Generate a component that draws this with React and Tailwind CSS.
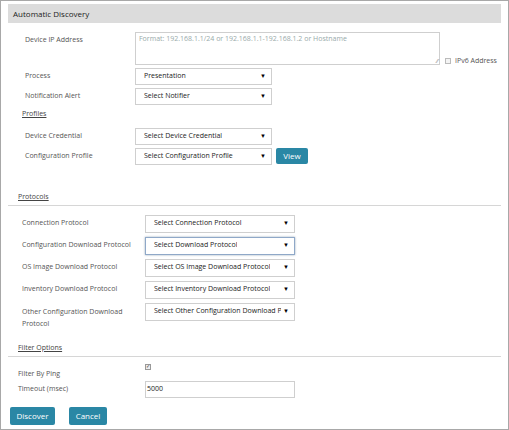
function Select({ text, w = "w-[137px]", h = "h-[17px]", focus = false }) {
  return (
    <div
      className={`${w} ${h} flex items-center justify-between border ${
        focus ? "border-[#8fa8c8] shadow-[0_0_2px_#9ab]" : "border-[#cfcfcf]"
      } bg-white pl-[8px] pr-[5px] text-[7px] text-[#222] shrink-0`}
    >
      <span className="whitespace-nowrap overflow-hidden">{text}</span>
      <span className="text-[6px] text-black ml-[2px] shrink-0">▼</span>
    </div>
  );
}

function Btn({ children, className = "" }) {
  return (
    <div
      className={`flex items-center justify-center rounded-[2px] bg-[#2a87a5] text-white text-[8px] ${className}`}
    >
      {children}
    </div>
  );
}

function SectionTitle({ children, className = "" }) {
  return (
    <div className={`border-b border-[#d6d6d6] leading-[10px] ${className}`}>
      <span className="underline text-[7px] text-[#444] pl-[10px]">{children}</span>
    </div>
  );
}

export default function App() {
  const protocols = [
    ["Connection Protocol", "Select Connection Protocol"],
    ["Configuration Download Protocol", "Select Download Protocol", true],
    ["OS Image Download Protocol", "Select OS Image Download Protocol"],
    ["Inventory Download Protocol", "Select Inventory Download Protocol"],
  ];
  return (
    <div
      className="w-[509px] h-[430px] border border-[#a8a8a8] bg-white pt-[3px] px-[7px] text-[#555]"
      style={{ fontFamily: '"Open Sans", "Noto Sans", sans-serif' }}
    >
      {/* header */}
      <div className="h-[19px] bg-[#dcdcdc] flex items-center pl-[5px] text-[8px] text-[#222]">
        Automatic Discovery
      </div>

      {/* device section */}
      <div className="pl-[17px] mt-[9px] flex flex-col gap-[3px]">
        <div className="flex items-start">
          <div className="w-[110px] text-[7px] pt-[3px]">Device IP Address</div>
          <div className="w-[305px] h-[33px] border border-[#cfcfcf] px-[3px] pt-[1px] text-[7px] text-[#9aa] relative">
            Format: 192.168.1.1/24 or 192.168.1.1-192.168.1.2 or Hostname
            <span className="absolute right-[1px] bottom-[0px] text-[6px] text-[#888] leading-none">⁄⁄</span>
          </div>
          <div className="self-end flex items-center ml-[5px] mb-[-1px]">
            <div className="w-[6px] h-[6px] border border-[#bbb] bg-[#f4f4f4]" />
            <span className="text-[7px] ml-[4px]">IPv6 Address</span>
          </div>
        </div>
        <div className="flex items-center">
          <div className="w-[110px] text-[7px]">Process</div>
          <Select text="Presentation" />
        </div>
        <div className="flex items-center">
          <div className="w-[110px] text-[7px]">Notification Alert</div>
          <Select text="Select Notifier" />
        </div>
      </div>

      {/* profiles */}
      <div className="ml-[9px] mt-[4px] pl-[5px]">
        <div className="underline text-[7px] text-[#444]">Profiles</div>
        <div className="pl-[3px] mt-[8px] flex flex-col gap-[3px]">
          <div className="flex items-center">
            <div className="w-[110px] text-[7px]">Device Credential</div>
            <Select text="Select Device Credential" />
          </div>
          <div className="flex items-center">
            <div className="w-[110px] text-[7px]">Configuration Profile</div>
            <Select text="Select Configuration Profile" />
            <Btn className="ml-[4px] w-[32px] h-[16px]">View</Btn>
          </div>
        </div>
      </div>

      {/* protocols */}
      <SectionTitle className="mt-[23px] pb-[3px]">Protocols</SectionTitle>
      <div className="pl-[14px] mt-[9px] flex flex-col gap-[4px]">
        {protocols.map(([l, s, f]) => (
          <div key={l} className="flex items-center">
            <div className="w-[123px] text-[7px]">{l}</div>
            <Select text={s} w="w-[150px]" h="h-[18px]" focus={f} />
          </div>
        ))}
        <div className="flex items-start">
          <div className="w-[123px] text-[7px] leading-[12px] mt-[3px] h-[18px]">
            Other Configuration Download
            <br />
            Protocol
          </div>
          <Select text="Select Other Configuration Download Protocol" w="w-[150px]" h="h-[18px]" />
        </div>
      </div>

      {/* filter options */}
      <SectionTitle className="mt-[15px] pb-[3px]">Filter Options</SectionTitle>
      <div className="pl-[10px] mt-[7px] flex flex-col">
        <div className="flex items-start h-[17px]">
          <div className="w-[127px] text-[7px] pt-[5px] leading-[10px]">Filter By Ping</div>
          <div className="w-[6px] h-[6px] border border-[#999] bg-[#eee] flex items-center justify-center text-[5px] leading-none text-[#333]">
            ✓
          </div>
        </div>
        <div className="flex items-center">
          <div className="w-[127px] text-[7px]">Timeout (msec)</div>
          <div className="w-[150px] h-[17px] border border-[#cfcfcf] flex items-center px-[1px] text-[7px] text-[#222]">
            5000
          </div>
        </div>
      </div>

      {/* buttons */}
      <div className="flex gap-[14px] mt-[9px] pl-[2px]">
        <Btn className="w-[45px] h-[18px]">Discover</Btn>
        <Btn className="w-[38px] h-[18px]">Cancel</Btn>
      </div>
    </div>
  );
}
